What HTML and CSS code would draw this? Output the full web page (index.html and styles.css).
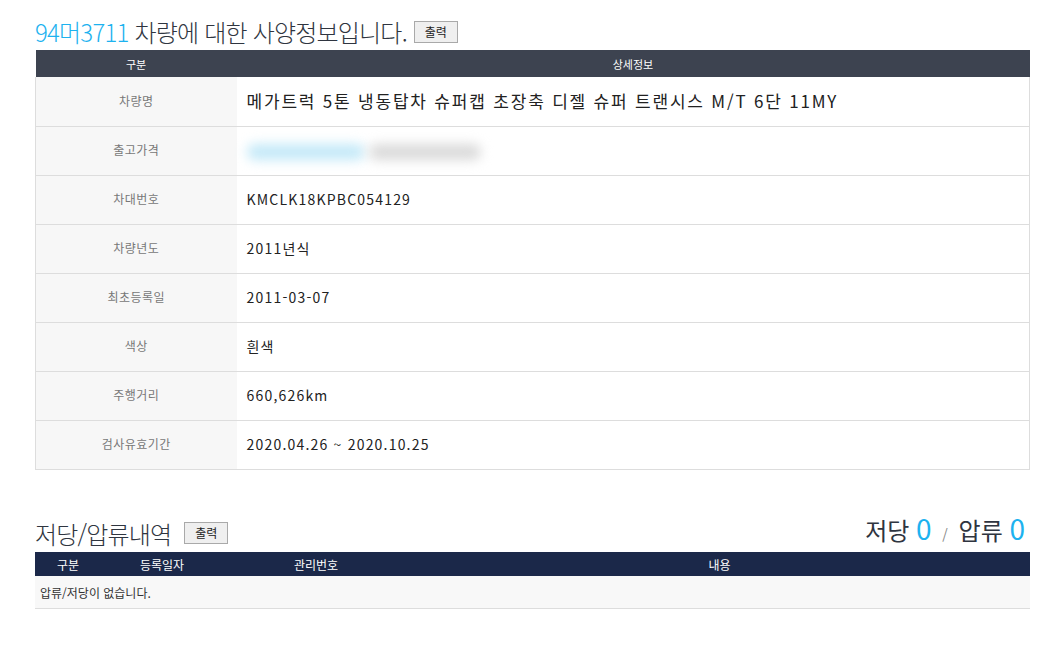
FILE: index.html
```html
<!DOCTYPE html>
<html lang="ko">
<head>
    <meta charset="UTF-8">
    <title>차량 사양정보</title>
    <link rel="stylesheet" href="styles.css">
</head>
<body>
    <div class="wrap">
        <!-- 사양정보 -->
        <div class="title-row">
            <h2 class="title"><span class="car-no">94머3711</span> 차량에 대한 사양정보입니다.</h2>
            <button class="print-btn">출력</button>
        </div>
        <table class="spec">
            <thead>
                <tr><th class="col-label">구분</th><th>상세정보</th></tr>
            </thead>
            <tbody>
                <tr class="first"><td class="label">차량명</td><td class="value big">메가트럭 5톤 냉동탑차 슈퍼캡 초장축 디젤 슈퍼 트랜시스 M/T 6단 11MY</td></tr>
                <tr><td class="label">출고가격</td><td class="value"><span class="blur blue"></span><span class="blur gray"></span></td></tr>
                <tr><td class="label">차대번호</td><td class="value">KMCLK18KPBC054129</td></tr>
                <tr><td class="label">차량년도</td><td class="value">2011년식</td></tr>
                <tr><td class="label">최초등록일</td><td class="value">2011-03-07</td></tr>
                <tr><td class="label">색상</td><td class="value">흰색</td></tr>
                <tr><td class="label">주행거리</td><td class="value">660,626km</td></tr>
                <tr><td class="label">검사유효기간</td><td class="value">2020.04.26 ~ 2020.10.25</td></tr>
            </tbody>
        </table>

        <!-- 저당/압류 -->
        <div class="title-row second">
            <h2 class="title">저당/압류내역</h2>
            <button class="print-btn">출력</button>
            <div class="count">저당 <span class="num">0</span> <span class="slash">/</span> 압류 <span class="num">0</span></div>
        </div>
        <table class="lien">
            <thead>
                <tr>
                    <th class="c1">구분</th>
                    <th class="c2">등록일자</th>
                    <th class="c3">관리번호</th>
                    <th>내용</th>
                </tr>
            </thead>
            <tbody>
                <tr><td colspan="4">압류/저당이 없습니다.</td></tr>
            </tbody>
        </table>
    </div>
</body>
</html>
```

FILE: styles.css
```css
body {
    margin: 0;
    background: #fff;
    font-family: "Noto Sans CJK KR", "Noto Sans", sans-serif;
    color: #222;
}

.wrap {
    width: 995px;
    padding: 9px 0 0 35px;
}

.title-row {
    display: flex;
    align-items: flex-end;
    height: 41px;
}

.title {
    margin: 0;
    font-size: 24px;
    font-weight: 300;
    letter-spacing: -0.8px;
    color: #2f3540;
    line-height: 36px;
}

.car-no {
    color: #1db2ef;
}

.print-btn {
    margin: 0 0 7px 7px;
    width: 44px;
    height: 22px;
    padding: 0;
    font-family: inherit;
    font-size: 12px;
    color: #222;
    background: #efefef;
    border: 1px solid #a9a9a9;
    line-height: 18px;
}

table {
    width: 100%;
    border-collapse: collapse;
}

.spec th {
    background: #3d4350;
    color: #fff;
    font-size: 11px;
    font-weight: normal;
    height: 27px;
    padding: 0;
}

.spec .col-label {
    width: 201px;
}

.spec td {
    height: 45px;
    border-bottom: 1px solid #ddd;
    padding: 0 0 3px;
}

.spec .first td {
    height: 46px;
}

.spec .label {
    background: #f7f7f7;
    color: #777;
    font-size: 12px;
    letter-spacing: 0.5px;
    text-align: center;
    border-left: 1px solid #ddd;
}

.spec .value {
    padding-left: 10px;
    font-size: 14px;
    letter-spacing: 1.2px;
    color: #222;
    border-right: 1px solid #ddd;
}

.spec .big {
    font-size: 17px;
    letter-spacing: 1.8px;
}

.blur {
    display: inline-block;
    height: 16px;
    vertical-align: middle;
    border-radius: 8px;
    filter: blur(6px);
}

.blur.blue {
    width: 118px;
    background: #c4e9f8;
}

.blur.gray {
    width: 112px;
    margin-left: 4px;
    background: #dadada;
}

.second {
    margin-top: 40px;
    height: 42px;
}

.second .print-btn {
    margin-left: 13px;
    margin-bottom: 8px;
}

.count {
    margin-left: auto;
    margin-right: 5px;
    font-size: 24px;
    color: #2f3540;
    line-height: 36px;
}

.count .num {
    color: #1db2ef;
    font-size: 28px;
}

.count .slash {
    font-size: 14px;
    color: #888;
    margin: 0 4px;
}

.lien th {
    background: #1b2849;
    color: #fff;
    font-size: 12px;
    font-weight: normal;
    height: 24px;
    padding: 0;
}

.lien .c1 { width: 66px; }
.lien .c2 { width: 122px; }
.lien .c3 { width: 186px; }

.lien td {
    background: #f8f8f8;
    height: 32px;
    padding: 0 0 0 5px;
    font-size: 12px;
    color: #333;
    border-bottom: 1px solid #ddd;
}
```
